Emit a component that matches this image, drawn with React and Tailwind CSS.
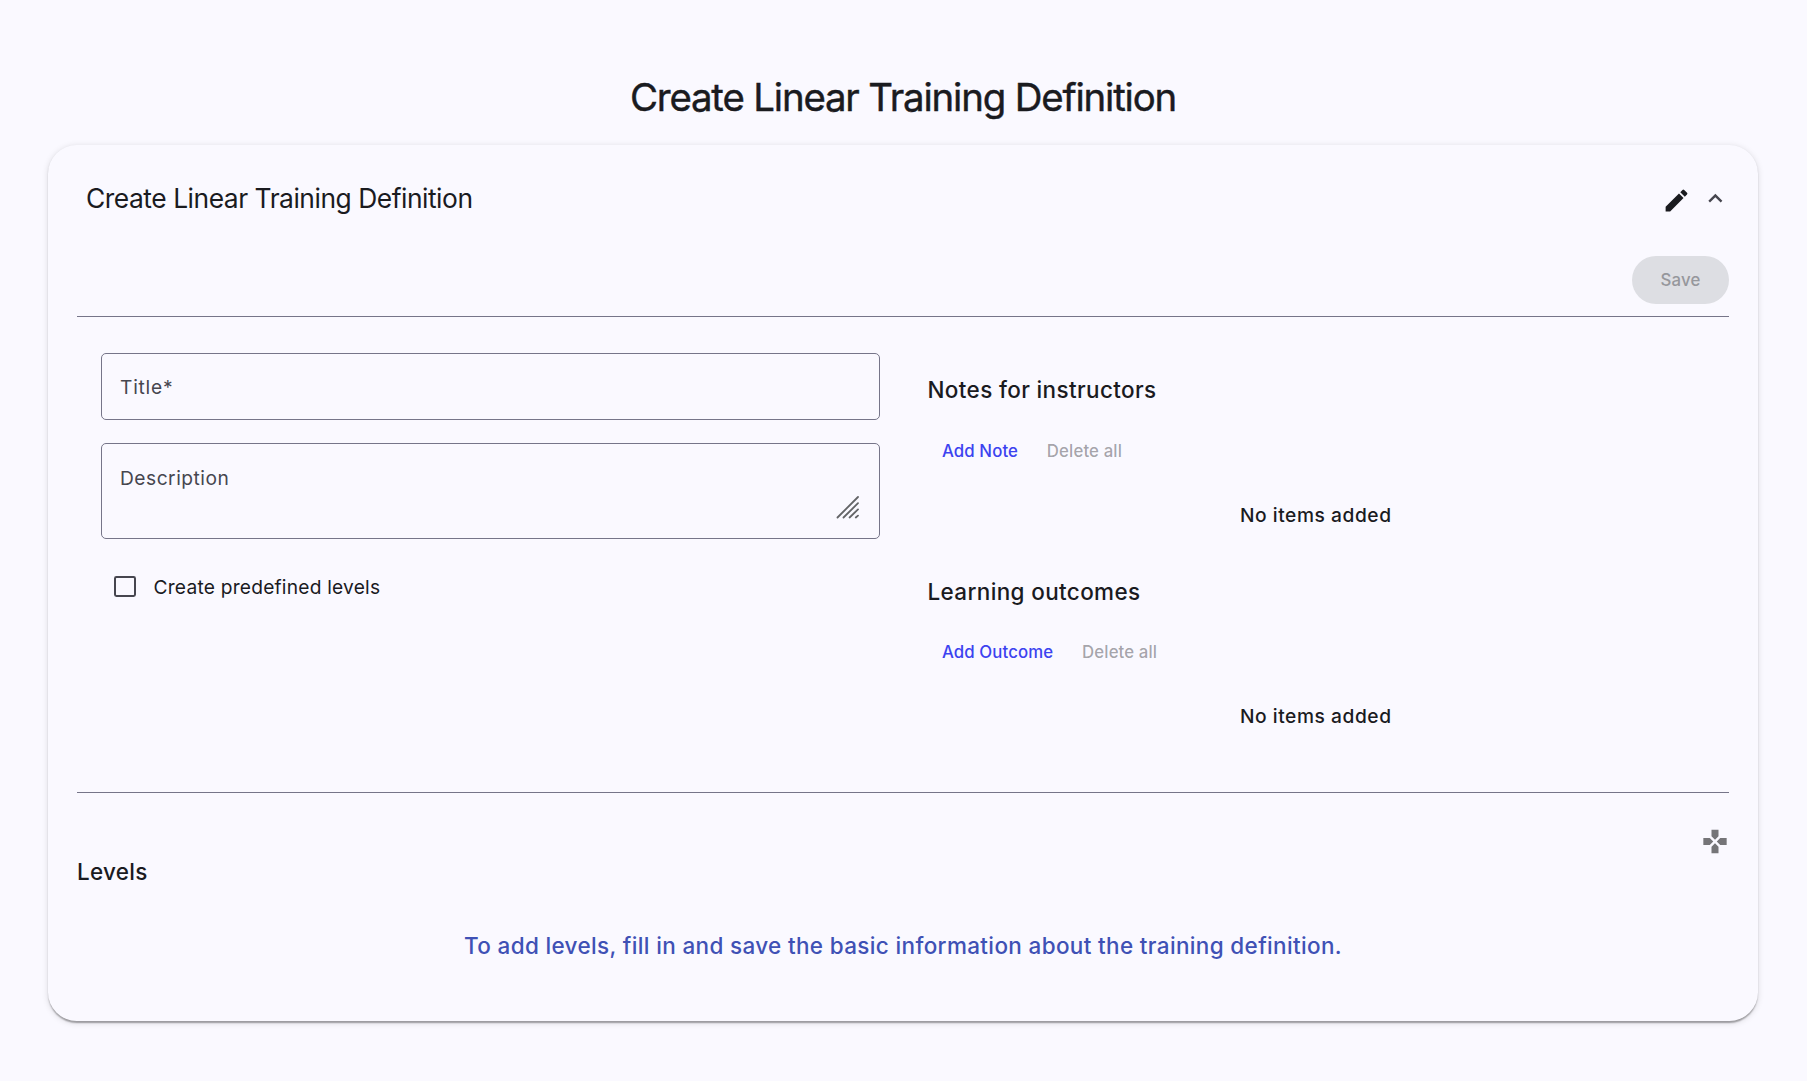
import React from "react";

function ItemSection({ title, addLabel, className }) {
  return (
    <section className={className}>
      <h3 className="h-[28px] text-[22.46px] leading-[28px] font-medium tracking-[0.37px]">{title}</h3>
      <div className="mt-[23.4px] flex h-[48px] items-center text-[16.8px] font-medium tracking-[0.12px]">
        <button className="px-[14.4px] text-[#3c43f0]">{addLabel}</button>
        <button className="px-[14.4px] text-[#1a1b1f]/40" disabled>Delete all</button>
      </div>
      <h4 className="mt-[25px] mr-[25px] h-[28px] text-center text-[19.2px] leading-[28px] font-medium tracking-[0.55px]">No items added</h4>
    </section>
  );
}

export default function App() {
  return (
    <main className="flex h-[1081px] flex-col bg-[#faf9ff] pr-[49px] pl-[48px] font-['Inter',sans-serif] text-[#1a1b1f]">
      <h1 className="mt-[73px] h-[48px] text-center text-[38.4px] leading-[48px] font-normal tracking-[-1.17px] [-webkit-text-stroke:0.45px_#1a1b1f]">
        Create Linear Training Definition
      </h1>
      <div className="mt-[24px] h-[876px] rounded-[28.8px] bg-[#faf9ff] px-[29px] shadow-[0_2.4px_1.5px_-1px_rgba(0,0,0,0.2),0_1.4px_1.5px_0_rgba(0,0,0,0.14),0_1.8px_6px_0_rgba(0,0,0,0.13)]">
        <header className="flex h-[111px] items-start justify-between pt-[35px] pl-[9px]">
          <h2 className="h-[36px] text-[26.4px] leading-[36px] tracking-[-0.47px]">Create Linear Training Definition</h2>
          <div className="flex items-center pt-[6px]">
            <svg className="h-[29px] w-[29px]" viewBox="0 0 24 24" fill="#1a1b1f">
              <path d="M3 17.25V21h3.75L17.81 9.94l-3.75-3.75L3 17.25zM20.71 7.04a1 1 0 0 0 0-1.41l-2.34-2.34a1 1 0 0 0-1.41 0l-1.83 1.83 3.75 3.75 1.83-1.83z" />
            </svg>
            <svg className="mt-[-5px] ml-[10px] h-[29px] w-[28px]" viewBox="0 0 24 24" fill="#46464f">
              <path d="M12.3 8l-6 6 1.41 1.41 4.59-4.58 4.59 4.58L18.3 14z" />
            </svg>
          </div>
        </header>
        <div className="flex h-[61px] justify-end border-b border-[#767589]">
          <button disabled className="h-[48px] w-[97px] rounded-full bg-[#dddee3] pt-[1px] text-[16.8px] font-medium tracking-[0.12px] text-[#96979c]">
            Save
          </button>
        </div>
        <div className="flex h-[476px] border-b border-[#767589]">
          <div className="ml-[24px] w-[779px] pt-[36px]">
            <div className="flex h-[67px] items-center rounded-[5px] border border-[#767589] px-[18px] pt-[2px] text-[19.2px] tracking-[0.75px] text-[#46464f]">
              Title*
            </div>
            <div className="mt-[23px] flex h-[96px] items-start justify-between rounded-[5px] border border-[#767589] px-[18px] pt-[20px] text-[19.2px] leading-[28.8px] tracking-[0.5px] text-[#46464f]">
              Description
              <svg className="mt-[32px] mr-[2px] h-[23px] w-[23px]" viewBox="0 0 23 23" fill="none" stroke="#636467" strokeWidth="1.8" strokeLinecap="round">
                <path d="M1.5 21.5L22 1M7.5 21.5L22 7.2M13.6 21.5L22 13.4M19.8 21.5L22 19.6" />
              </svg>
            </div>
            <label className="mt-[34px] flex h-[28px] items-center pl-[13px] text-[19.2px]">
              <span className="mb-[1px] h-[21px] w-[22px] rounded-[2.4px] border-2 border-[#46464f]" />
              <span className="ml-[17.5px] tracking-[0.21px]">Create predefined levels</span>
            </label>
          </div>
          <div className="ml-[47.5px] flex-1 pt-[59.2px]">
            <ItemSection title="Notes for instructors" addLabel="Add Note" />
            <ItemSection className="mt-[49.1px]" title="Learning outcomes" addLabel="Add Outcome" />
          </div>
        </div>
        <div className="flex h-[64px] items-start justify-end pt-[34px]">
          <svg className="h-[29px] w-[28px]" viewBox="0 0 24 24" fill="#757578">
            <path d="M15 7.5V2H9v5.5l3 3 3-3zM7.5 9H2v6h5.5l3-3-3-3zM9 16.5V22h6v-5.5l-3-3-3 3zM16.5 9l-3 3 3 3H22V9h-5.5z" />
          </svg>
        </div>
        <h3 className="mt-[1px] h-[28px] text-[22.46px] leading-[28px] font-medium tracking-[0.3px]">Levels</h3>
        <h3 className="mt-[46px] h-[28px] text-center text-[22.46px] leading-[28px] font-medium tracking-[0.365px] text-[#3f51b5]">
          To add levels, fill in and save the basic information about the training definition.
        </h3>
      </div>
    </main>
  );
}
